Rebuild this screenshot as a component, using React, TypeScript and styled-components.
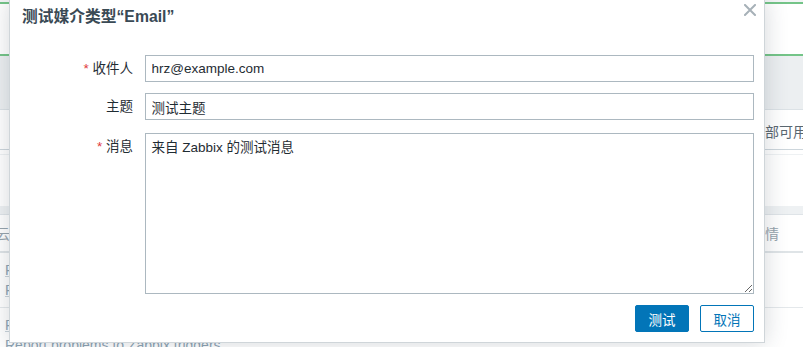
import * as React from "react";
import styled, { createGlobalStyle } from "styled-components";

const GlobalStyle = createGlobalStyle`
  html, body {
    margin: 0;
    padding: 0;
    background: #ffffff;
  }
  body {
    font-family: "Liberation Sans", Arial, "Noto Sans CJK SC", sans-serif;
    font-size: 13.5px;
    color: #1f2c33;
  }
  * {
    box-sizing: border-box;
  }
`;

const FONT = `"Liberation Sans", Arial, "Noto Sans CJK SC", sans-serif`;

export default function App() {
  return (
    <>
      <GlobalStyle />
      <Page>
        <BackgroundPage />
        <Dialog>
          <DialogHeader>
            <Title>测试媒介类型“Email”</Title>
            <CloseButton type="button" aria-label="关闭">
              <svg width="12" height="12" viewBox="0 0 12 12">
                <path
                  d="M1 1 L11 11 M11 1 L1 11"
                  stroke="#a7b1b8"
                  strokeWidth="2"
                  strokeLinecap="square"
                />
              </svg>
            </CloseButton>
          </DialogHeader>

          <Form>
            <Label $required>收件人</Label>
            <Input defaultValue="hrz@example.com" />

            <Label>主题</Label>
            <Input defaultValue="测试主题" />

            <Label $required>消息</Label>
            <TextArea defaultValue="来自 Zabbix 的测试消息" />
          </Form>

          <Footer>
            <Button $primary type="button">
              测试
            </Button>
            <Button type="button">取消</Button>
          </Footer>
        </Dialog>
      </Page>
    </>
  );
}

// page lying under the modal, only its edges show
const BackgroundPage: React.FC = () => (
  <Backdrop>
    <Band $h={2} $bg="#f3f5f6" />
    <Band $h={2} $bg="#74c488" />
    <Band $h={50} $bg="#ffffff" />
    <Band $h={2} $bg="#74c488" />
    <Band $h={54} $bg="#eceff1" $border="#dce2e6" />
    <FilterRow>全部可用</FilterRow>
    <Band $h={5} $bg="#ffffff" $border="#eef1f3" />
    <Band $h={51} $bg="#ffffff" />
    <Band $h={9} $bg="#eef1f3" $border="#dfe4e8" />
    <TableHead>
      <HeadCell $cut>私有云</HeadCell>
      <HeadCell>详情</HeadCell>
    </TableHead>
    <TableRow>
      <LinkText>Report host unavailable</LinkText>
      <LinkText>Report service down</LinkText>
    </TableRow>
    <TableRow>
      <LinkText>Reboot disk full</LinkText>
      <LinkText>Report problems to Zabbix triggers</LinkText>
    </TableRow>
  </Backdrop>
);

const Page = styled.div`
  position: relative;
  width: 100%;
  height: 347px;
  overflow: hidden;
`;

const Backdrop = styled.div`
  display: flex;
  flex-direction: column;
  width: 100%;
  height: 100%;
  font-family: ${FONT};
`;

const Band = styled.div<{ $h: number; $bg: string; $border?: string }>`
  flex: none;
  height: ${(p) => p.$h}px;
  background: ${(p) => p.$bg};
  border-bottom: ${(p) => (p.$border ? `1px solid ${p.$border}` : "none")};
`;

const FilterRow = styled.div`
  flex: none;
  height: 40px;
  padding: 14px 0 0 751px;
  font-size: 14px;
  line-height: 16px;
  color: #5a6770;
  white-space: nowrap;
  border-bottom: 1px solid #cdd6dc;
`;

const TableHead = styled.div`
  flex: none;
  height: 38px;
  display: flex;
  justify-content: space-between;
  align-items: center;
  padding: 0 24px 0 0;
  border-bottom: 2px solid #dfe4e7;
  font-size: 14px;
  color: #97a4ad;
  white-space: nowrap;
`;

const HeadCell = styled.span<{ $cut?: boolean }>`
  margin-left: ${(p) => (p.$cut ? "-32px" : "0")};
`;

const TableRow = styled.div`
  flex: none;
  display: flex;
  flex-direction: column;
  gap: 4px;
  padding: 9px 0 9px 5px;
  border-bottom: 1px solid #e4e8eb;
`;

const LinkText = styled.span`
  font-size: 14px;
  line-height: 16px;
  color: #8ea4b4;
  white-space: nowrap;
  text-decoration: underline;
  text-decoration-color: #c9d3da;
`;

const Dialog = styled.div`
  position: absolute;
  top: -1px;
  left: 9px;
  width: 756px;
  background: #ffffff;
  border: 1px solid #cfd5d9;
  box-shadow: 0 0 22px rgba(40, 56, 68, 0.2);
  padding: 0 10px 10px 12px;
  font-family: ${FONT};
`;

const DialogHeader = styled.div`
  position: relative;
  padding-top: 8px;
  margin-bottom: 29px;
`;

const Title = styled.h4`
  margin: 0;
  font-size: 15.75px;
  line-height: 18px;
  font-weight: bold;
  color: #3a4a55;
`;

const CloseButton = styled.button`
  position: absolute;
  top: 4px;
  right: -2px;
  width: 12px;
  height: 12px;
  padding: 0;
  border: 0;
  background: transparent;
  display: flex;
  cursor: pointer;
`;

const Form = styled.div`
  display: grid;
  grid-template-columns: 111px 1fr;
  column-gap: 12px;
  row-gap: 11px;

  & > :nth-child(5),
  & > :nth-child(6) {
    margin-top: 2px;
  }
`;

const Label = styled.label<{ $required?: boolean }>`
  text-align: right;
  font-size: 13.5px;
  line-height: 27px;
  color: #1f2c33;
  white-space: nowrap;

  &::before {
    content: ${(p) => (p.$required ? '"* "' : '""')};
    color: #e0383c;
  }
`;

const fieldBase = `
  font-family: ${FONT};
  font-size: 13.5px;
  color: #1f2c33;
  background: #ffffff;
  border: 1px solid #acb8c0;
  border-radius: 0;
  outline: none;
  margin: 0;
  width: 100%;
`;

const Input = styled.input`
  ${fieldBase}
  height: 27px;
  padding: 0 5.5px;
`;

const TextArea = styled.textarea`
  ${fieldBase}
  display: block;
  height: 161px;
  padding: 5px 5.5px;
  line-height: 17px;
  resize: both;
`;

const Footer = styled.div`
  display: flex;
  justify-content: flex-end;
  gap: 11px;
  margin-top: 11px;
`;

const Button = styled.button<{ $primary?: boolean }>`
  width: 54px;
  height: 27px;
  padding: 0;
  border-radius: 2px;
  font-family: ${FONT};
  font-size: 13.5px;
  cursor: pointer;
  border: 1px solid #0275b8;
  background: ${(p) => (p.$primary ? "#0275b8" : "#ffffff")};
  color: ${(p) => (p.$primary ? "#ffffff" : "#0275b8")};
`;
